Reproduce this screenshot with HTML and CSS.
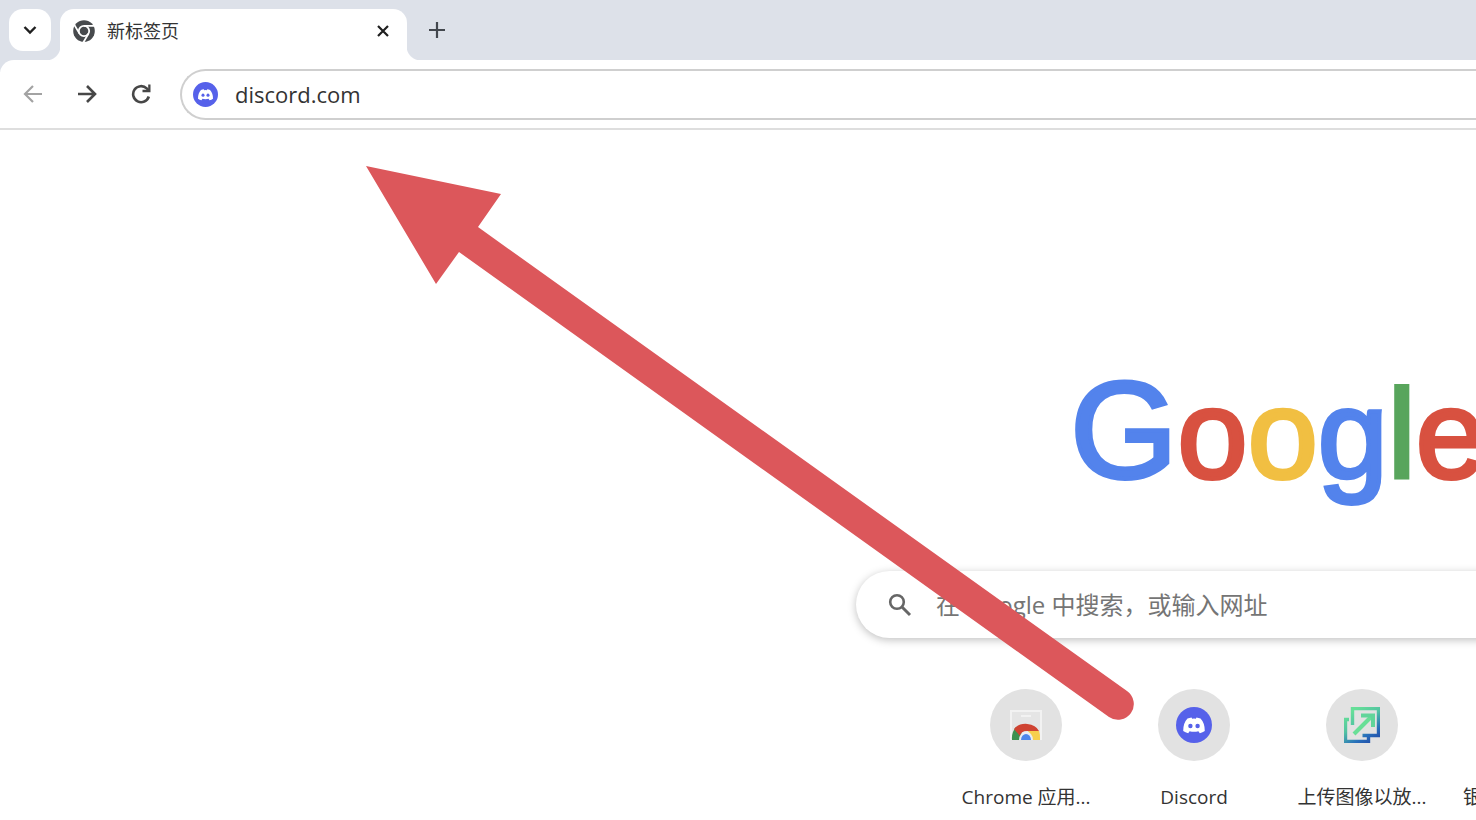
FILE: index.html
```html
<!DOCTYPE html>
<html lang="zh-CN">
<head>
    <meta charset="UTF-8">
    <meta name="viewport" content="width=device-width, initial-scale=1.0">
    <title>新标签页</title>
    <link rel="stylesheet" href="styles.css">
</head>
<body>
    <svg class="symbols" aria-hidden="true">
        <symbol id="discord" viewBox="0 0 36 36">
            <circle cx="18" cy="18" r="18" fill="#5661ea"/>
            <path fill="#fff" d="M11.500 11.600 Q13.500 10.600 15.500 10.400 L16.200 11.700 Q18 11.500 19.800 11.700 L20.500 10.400 Q22.500 10.600 24.500 11.600 Q28.800 16 28.800 24 Q26.700 25.600 23.800 26.200 L22.400 24.200 Q18 25.200 13.600 24.200 L12.200 26.200 Q9.300 25.600 7.200 24 Q7.200 16 11.500 11.600Z"/>
            <ellipse cx="14.400" cy="19" rx="2.200" ry="2.300" fill="#5661ea"/>
            <ellipse cx="21.600" cy="19" rx="2.200" ry="2.300" fill="#5661ea"/>
        </symbol>
    </svg>

    <header class="tab-strip">
        <button class="tab-search" aria-label="搜索标签页">
            <svg width="14" height="10" viewBox="0 0 14 10"><path d="M1.500 2 L7 7.500 L12.500 2" fill="none" stroke="#1f1f1f" stroke-width="2.400"/></svg>
        </button>
        <div class="tab">
            <svg width="22" height="22" viewBox="0 0 22 22">
                <circle cx="11" cy="11" r="10.800" fill="#474a4d"/>
                <g fill="none" stroke="#fff" stroke-width="1.800">
                    <circle cx="11" cy="11" r="5.200"/>
                    <path d="M11 5.800 H21.500 M6.500 13.600 L1.200 4.600 M15.500 13.600 L10.300 22.500"/>
                </g>
            </svg>
            <span class="tab-title">新标签页</span>
            <button class="tab-close" aria-label="关闭">
                <svg width="12" height="12" viewBox="0 0 12 12"><path d="M1 1 L11 11 M11 1 L1 11" stroke="#1f1f1f" stroke-width="2.200"/></svg>
            </button>
        </div>
        <button class="new-tab" aria-label="新建标签页">
            <svg width="16" height="16" viewBox="0 0 16 16"><path d="M8 0 V16 M0 8 H16" stroke="#43474e" stroke-width="2.200"/></svg>
        </button>
    </header>

    <nav class="toolbar">
        <button class="nav-button" aria-label="后退">
            <svg width="20" height="18" viewBox="0 0 20 18"><path d="M19 9 H2 M10 1 L2 9 L10 17" fill="none" stroke="#a3a3a3" stroke-width="2.200"/></svg>
        </button>
        <button class="nav-button" aria-label="前进">
            <svg width="20" height="18" viewBox="0 0 20 18"><path d="M1 9 H18 M10 1 L18 9 L10 17" fill="none" stroke="#474747" stroke-width="2.600"/></svg>
        </button>
        <button class="nav-button" aria-label="重新加载">
            <svg width="20" height="20" viewBox="0 0 20 20">
                <path d="M17.800 12.500 A8 8 0 1 1 15.700 4.400 L18 6.700" fill="none" stroke="#474747" stroke-width="2.600"/>
                <path d="M19.500 0.500 V8.200 H11.500 V5.800 H17.200 V0.500Z" fill="#474747"/>
            </svg>
        </button>
        <div class="omnibox">
            <svg width="25" height="25"><use href="#discord"/></svg>
            <input type="text" aria-label="地址栏" value="discord.com">
        </div>
    </nav>

    <main class="new-tab-page">
        <div class="content">
            <h1 class="logo"><span class="capital blue">G</span><span class="red">o</span><span class="yellow">o</span><span class="blue">g</span><span class="green">l</span><span class="red">e</span></h1>
            <div class="search-box">
                <svg width="24" height="24" viewBox="0 0 24 24"><circle cx="9" cy="9" r="6.800" fill="none" stroke="#666" stroke-width="2.600"/><path d="M14 14 L22 22" stroke="#666" stroke-width="3"/></svg>
                <input type="text" aria-label="搜索" placeholder="在 Google 中搜索，或输入网址">
            </div>
            <div class="shortcuts">
                <a class="shortcut" href="#">
                    <span class="shortcut-icon">
                        <svg width="36" height="36" viewBox="0 0 36 36">
                            <path d="M3 33 V4 H33 V33" fill="#e5e5e5" stroke="#f2f2f2" stroke-width="2"/>
                            <path d="M13 9 H23" stroke="#f2f2f2" stroke-width="2"/>
                            <path d="M4 33 A14 16 0 0 1 8 20 L14 27 L12 33Z" fill="#3d9150"/>
                            <path d="M6 22 A14 11 0 0 1 31 24 H19 Q13 24 12 29Z" fill="#cf4332"/>
                            <path d="M20 24 H31 Q32.500 28 32 33 H24Z" fill="#f7cf4d"/>
                            <path d="M11 33 A7 8.500 0 0 1 25 33Z" fill="#e8ecf2"/>
                            <path d="M13 33 A5 6 0 0 1 23 33Z" fill="#4c86ea"/>
                        </svg>
                    </span>
                    <span class="shortcut-title">Chrome 应用...</span>
                </a>
                <a class="shortcut" href="#">
                    <span class="shortcut-icon"><svg width="36" height="36"><use href="#discord"/></svg></span>
                    <span class="shortcut-title">Discord</span>
                </a>
                <a class="shortcut" href="#">
                    <span class="shortcut-icon">
                        <svg width="36" height="36" viewBox="0 0 36 36">
                            <defs>
                                <linearGradient id="frame" gradientUnits="userSpaceOnUse" x1="8" y1="4" x2="27" y2="34">
                                    <stop offset="0" stop-color="#66df98"/>
                                    <stop offset="0.400" stop-color="#52c3a2"/>
                                    <stop offset="0.800" stop-color="#286fbb"/>
                                    <stop offset="1" stop-color="#2456ad"/>
                                </linearGradient>
                            </defs>
                            <path d="M8.500 18 V1.500 H34.500 V28.500 H18.500 M5 12.500 H1.500 V34.500 H24.500 V29" fill="none" stroke="url(#frame)" stroke-width="3.400"/>
                            <path d="M10 27 L27 10" stroke="#69df97" stroke-width="4"/>
                            <path d="M17 8.500 H29 V20" fill="none" stroke="#61d59a" stroke-width="4"/>
                        </svg>
                    </span>
                    <span class="shortcut-title">上传图像以放...</span>
                </a>
                <a class="shortcut" href="#">
                    <span class="shortcut-icon"></span>
                    <span class="shortcut-title clipped">银</span>
                </a>
            </div>
        </div>
    </main>

    <svg class="arrow" width="770" height="556" viewBox="0 0 770 556" aria-hidden="true">
        <path fill="#dc575b" d="M0 0 L135 28 L112 61 L761 525 A15.500 15.500 0 0 1 743 551 L93 86 L70 118Z"/>
    </svg>
</body>
</html>
```

FILE: styles.css
```css
* {
    box-sizing: border-box;
}
body {
    margin: 0;
    min-height: 100vh;
    overflow: hidden;
    position: relative;
    background: #fff;
    color: #333;
    font-family: "Open Sans", "Noto Sans CJK SC", sans-serif;
}
button {
    display: flex;
    align-items: center;
    justify-content: center;
    padding: 0;
    border: none;
    background: none;
    cursor: pointer;
}
input {
    flex: 1;
    min-width: 0;
    padding: 0;
    border: none;
    outline: none;
    background: none;
    font-family: inherit;
}
svg {
    display: block;
    flex-shrink: 0;
}
.symbols {
    position: absolute;
    width: 0;
    height: 0;
}

/* tabs */
.tab-strip {
    display: flex;
    height: 72px;
    padding: 9px 9px 12px;
    background: #dde1e9;
}
.tab-search {
    width: 42px;
    height: 42px;
    border-radius: 14px;
    background: #fff;
}
.tab {
    position: relative;
    display: flex;
    align-items: center;
    width: 347px;
    height: 51px;
    margin-left: 9px;
    padding: 0 14px 8px 13px;
    border-radius: 14px 14px 0 0;
    background: #fff;
}
.tab::before,
.tab::after {
    content: "";
    position: absolute;
    bottom: 0;
    width: 14px;
    height: 14px;
}
.tab::before {
    right: 100%;
    background: radial-gradient(circle at 0 0, transparent 14px, #fff 15px);
}
.tab::after {
    left: 100%;
    background: radial-gradient(circle at 100% 0, transparent 14px, #fff 15px);
}
.tab-title {
    flex: 1;
    margin-left: 12px;
    font-size: 18px;
    line-height: 24px;
}
.tab-close {
    width: 20px;
    height: 20px;
}
.new-tab {
    width: 30px;
    height: 42px;
    margin-left: 15px;
}

/* toolbar */
.toolbar {
    display: flex;
    align-items: center;
    height: 70px;
    margin-top: -12px;
    padding-left: 18px;
    border-bottom: 2px solid #dedede;
    border-radius: 14px 0 0 0;
    background: #fff;
}
.nav-button {
    width: 30px;
    height: 30px;
    margin-right: 24px;
}
.omnibox {
    flex: 1;
    display: flex;
    align-items: center;
    gap: 17px;
    height: 51px;
    padding-left: 11px;
    border: 2px solid #cfcfcf;
    border-right: none;
    border-radius: 26px 0 0 26px;
}
.omnibox input {
    height: 32px;
    color: #333;
    font-size: 22px;
}

/* new tab page */
.new-tab-page {
    padding: 224px 0 0 58%;
}
.content {
    display: flex;
    flex-direction: column;
    align-items: center;
    width: 844px;
}
.logo {
    margin: 0;
    font-family: "Liberation Sans", sans-serif;
    font-size: 126px;
    font-weight: 400;
    line-height: 152px;
    -webkit-text-stroke: 4px currentColor;
}
.capital {
    font-size: 138px;
}
.blue {
    color: #5383ec;
}
.red {
    color: #d85140;
}
.yellow {
    color: #f1bf42;
}
.green {
    color: #58a55c;
}
.search-box {
    display: flex;
    align-items: center;
    gap: 24px;
    width: 100%;
    height: 67px;
    margin-top: 60px;
    padding-left: 32px;
    border-radius: 34px;
    background: #fff;
    box-shadow: 0 2px 8px rgba(0, 0, 0, 0.25);
}
.search-box input {
    height: 40px;
    font-size: 24px;
}
.search-box input::placeholder {
    color: #757575;
    opacity: 1;
}
.shortcuts {
    display: flex;
    margin-top: 51px;
}
.shortcut {
    display: flex;
    flex-direction: column;
    align-items: center;
    gap: 22px;
    width: 168px;
    color: #333;
    text-decoration: none;
}
.shortcut-icon {
    display: flex;
    align-items: center;
    justify-content: center;
    width: 72px;
    height: 72px;
    border-radius: 50%;
    background: #e2e2e2;
}
.shortcut-title {
    width: 134px;
    font-size: 19px;
    line-height: 28px;
    text-align: center;
    white-space: nowrap;
}
.clipped {
    text-align: left;
}

/* pointer over the page */
.arrow {
    position: absolute;
    top: 166px;
    left: 366px;
    pointer-events: none;
}
```
